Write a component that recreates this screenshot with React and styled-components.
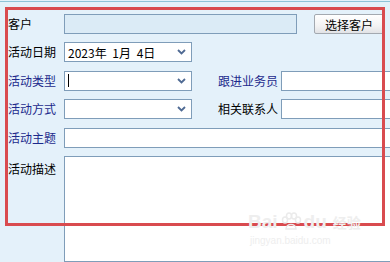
import React from 'react';
import styled, { createGlobalStyle } from 'styled-components';

const GlobalStyle = createGlobalStyle`
  html, body {
    margin: 0;
    padding: 0;
    overflow: hidden;
    background: #e4f1fa;
  }
  body {
    font-family: "Noto Sans CJK SC", "DejaVu Sans", sans-serif;
    font-size: 12px;
  }
`;

const Page = styled.div`
  position: relative;
  width: 390px;
  height: 262px;
  overflow: hidden;
  box-sizing: border-box;
  padding-top: 1px;
`;

const TopLine = styled.div`
  height: 1px;
  background: #8fc3d8;
`;

const Form = styled.div`
  display: flex;
  flex-direction: column;
  gap: 8.4px;
  padding: 12px 0 0 8px;
`;

const Row = styled.div`
  display: flex;
  align-items: ${(p) => (p.$top ? 'flex-start' : 'center')};
  height: ${(p) => p.$h || 20}px;
`;

const Label = styled.div`
  width: 56px;
  flex-shrink: 0;
  line-height: 20px;
  color: ${(p) => (p.$blue ? '#1c2a8c' : '#000')};
  white-space: nowrap;
  margin-top: ${(p) => (p.$top ? 3 : 0)}px;
`;

const SideLabel = styled(Label)`
  width: 86px;
  padding-right: 3px;
  text-align: right;
`;

const Field = styled.div`
  box-sizing: border-box;
  height: ${(p) => p.$h || 20}px;
  width: ${(p) => p.$w}px;
  flex-shrink: 0;
  border: 1px solid #7f9db9;
  background: ${(p) => (p.$disabled ? '#dbebf6' : '#fff')};
  display: flex;
  align-items: center;
  padding-left: 3px;
  color: #000;
`;

const SelectBox = styled(Field)`
  justify-content: space-between;
  padding-right: 5px;
`;

const DateText = styled.span`
  word-spacing: 3px;
`;

const Caret = styled.span`
  width: 1px;
  height: 13px;
  background: #000;
`;

const Button = styled.div`
  box-sizing: border-box;
  margin-left: 17px;
  width: 70px;
  height: 20px;
  border: 1px solid #a3a9b0;
  border-radius: 2px;
  background: linear-gradient(#ffffff, #f3f3f3 60%, #e1e3e6);
  display: flex;
  align-items: center;
  justify-content: center;
  font-size: 12px;
  color: #000;
`;

const Chevron = () => (
  <svg width="9" height="6" viewBox="0 0 9 6">
    <path d="M1 1 L4.5 4.5 L8 1" fill="none" stroke="#4f6a93" strokeWidth="1.8" />
  </svg>
);

const Annotation = styled.div`
  position: absolute;
  left: 5px;
  top: 7px;
  width: 380px;
  height: 219px;
  box-sizing: border-box;
  border: 3px solid #d94b4f;
  pointer-events: none;
`;

const Watermark = styled.div`
  position: absolute;
  left: 248px;
  top: 212px;
  color: #eeeeee;
  font-family: "Liberation Sans", sans-serif;
  pointer-events: none;
`;

const MarkTitle = styled.div`
  display: flex;
  align-items: flex-end;
  gap: 2px;
  font-size: 19px;
  font-weight: bold;
  line-height: 20px;
`;

const MarkCn = styled.span`
  font-family: "Noto Sans CJK SC", sans-serif;
  font-size: 14px;
  margin-left: 4px;
`;

const MarkUrl = styled.div`
  font-size: 10px;
  margin-top: 3px;
  padding-left: 2px;
`;

const App = () => {
  return (
    <Page>
      <GlobalStyle />
      <TopLine />
      <Form>
        <Row>
          <Label>客户</Label>
          <Field $w={233} $disabled />
          <Button>选择客户</Button>
        </Row>
        <Row>
          <Label>活动日期</Label>
          <SelectBox $w={128}>
            <DateText>2023年 1月 4日</DateText>
            <Chevron />
          </SelectBox>
        </Row>
        <Row>
          <Label $blue>活动类型</Label>
          <SelectBox $w={128}>
            <Caret />
            <Chevron />
          </SelectBox>
          <SideLabel $blue>跟进业务员</SideLabel>
          <Field $w={140} />
        </Row>
        <Row>
          <Label $blue>活动方式</Label>
          <SelectBox $w={128}>
            <span />
            <Chevron />
          </SelectBox>
          <SideLabel>相关联系人</SideLabel>
          <Field $w={140} />
        </Row>
        <Row>
          <Label $blue>活动主题</Label>
          <Field $w={360} />
        </Row>
        <Row $h={110} $top>
          <Label $top>活动描述</Label>
          <Field $w={360} $h={106} />
        </Row>
      </Form>
      <Annotation />
      <Watermark>
        <MarkTitle>
          <span>Bai</span>
          <svg width="22" height="20" viewBox="0 0 22 20">
            <g fill="none" stroke="#ebebeb" strokeWidth="1.5">
              <ellipse cx="5" cy="8" rx="2.5" ry="3" />
              <ellipse cx="9" cy="4" rx="2.5" ry="3" />
              <ellipse cx="14" cy="4" rx="2.5" ry="3" />
              <ellipse cx="18" cy="8" rx="2.5" ry="3" />
              <path d="M6 17 C6 11 16 11 16 17 Z" />
            </g>
          </svg>
          <span>du</span>
          <MarkCn>经验</MarkCn>
        </MarkTitle>
        <MarkUrl>jingyan.baidu.com</MarkUrl>
      </Watermark>
    </Page>
  );
};

export default App;
